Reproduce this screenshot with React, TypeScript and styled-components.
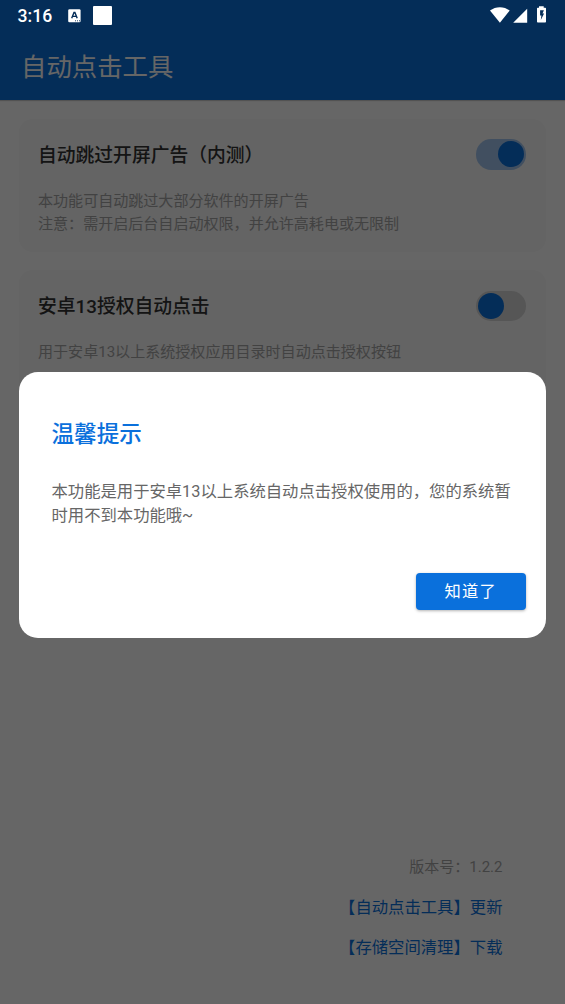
import React from "react";
import styled, { createGlobalStyle } from "styled-components";

const PRIMARY = "#0a70dc";

const GlobalStyle = createGlobalStyle`
  * { box-sizing: border-box; }
  body {
    margin: 0;
    background: #fff;
    font-family: Roboto, "Noto Sans CJK SC", sans-serif;
  }
`;

const Screen = styled.div`
  position: relative;
  display: flex;
  flex-direction: column;
  height: 1004px;
  overflow: hidden;
  background: #fff;
`;

const AppBar = styled.header`
  height: 100px;
  padding: 34px 21px 0;
  display: flex;
  align-items: center;
  background: ${PRIMARY};
  box-shadow: 0 1px 1px rgba(0, 0, 0, 0.2);
`;

const AppTitle = styled.h1`
  margin: 0;
  font-size: 25.4px;
  line-height: 36px;
  font-weight: 400;
  color: #fff;
`;

const CardList = styled.main`
  display: flex;
  flex-direction: column;
  gap: 18px;
  padding: 19px 19px 0;
`;

const Card = styled.section`
  height: 133px;
  padding: 20px 20px 0 19px;
  border-radius: 14px;
  background: #f9f9f9;
`;

const CardHead = styled.div`
  display: flex;
  align-items: flex-start;
  justify-content: space-between;
  height: 31px;
`;

const CardTitle = styled.h2`
  margin: 3px 0 0;
  font-size: 18.8px;
  line-height: 29px;
  font-weight: 500;
  color: #333;
`;

const Switch = styled.div<{ $on?: boolean }>`
  display: flex;
  align-items: center;
  justify-content: ${(p) => (p.$on ? "flex-end" : "flex-start")};
  width: 50px;
  height: 30.5px;
  margin-top: ${(p) => (p.$on ? "0" : "0.5px")};
  padding: 0 2px;
  border-radius: 15.25px;
  background: ${(p) => (p.$on ? "#a3c6ef" : "#d6d6d6")};
`;

const Thumb = styled.span`
  width: 26px;
  height: 26px;
  border-radius: 50%;
  background: ${PRIMARY};
`;

const CardText = styled.p`
  margin: 20px 0 0;
  font-size: 15.05px;
  line-height: 23px;
  color: #a6a6a6;
  white-space: nowrap;
`;

const Footer = styled.footer`
  display: flex;
  flex-direction: column;
  align-items: flex-end;
  margin-top: auto;
  padding: 0 62.5px 37px 0;
`;

const Version = styled.span`
  height: 40px;
  font-size: 15px;
  line-height: 40px;
  color: #a6a6a6;
`;

const FooterLink = styled.a`
  height: 40px;
  font-size: 16.35px;
  line-height: 41px;
  color: ${PRIMARY};
`;

const Scrim = styled.div`
  position: absolute;
  inset: 0;
  display: flex;
  flex-direction: column;
  padding: 372px 19px 0;
  background: rgba(0, 0, 0, 0.6);
`;

const Dialog = styled.div`
  display: flex;
  flex-direction: column;
  height: 265.5px;
  padding: 45px 20px 28px 32.5px;
  border-radius: 19px;
  background: #fff;
`;

const DialogTitle = styled.h2`
  margin: 0;
  font-size: 22.6px;
  line-height: 35px;
  font-weight: 500;
  color: ${PRIMARY};
`;

const DialogText = styled.p`
  margin: 28px 0 0;
  font-size: 16.33px;
  line-height: 24px;
  color: #666;
  white-space: nowrap;
`;

const ConfirmButton = styled.button`
  align-self: flex-end;
  width: 110.5px;
  height: 36.5px;
  margin-top: auto;
  padding: 2px 0 0;
  border: 0;
  border-radius: 4px;
  background: ${PRIMARY};
  color: #fff;
  font-family: inherit;
  font-size: 16.3px;
  line-height: 34.5px;
  letter-spacing: 1.2px;
  box-shadow: 0 1px 3px rgba(0, 0, 0, 0.3);
`;

const StatusBar = styled.div`
  position: absolute;
  top: 0;
  left: 0;
  right: 0;
  height: 32px;
  display: flex;
  align-items: center;
  padding: 0 18px 0 17.5px;
  color: #fff;
`;

const Clock = styled.span`
  width: 50.5px;
  font-size: 17.6px;
  line-height: 32px;
  font-weight: 500;
`;

const Notice = styled.span`
  width: 19px;
  height: 19px;
  margin: -2px 0 0 12px;
  border-radius: 1px;
  background: #fff;
`;

const SystemIcons = styled.div`
  display: flex;
  margin: -2px 0 0 auto;
`;

const KeyboardIcon = () => (
  <svg width="13" height="14" viewBox="0 0 13 14" style={{ marginTop: -1 }}>
    <rect x="0.2" y="0.3" width="12.4" height="13" rx="1.3" fill="#fff" />
    <path d="M3.7 9.3 6 3.5h.9l2.3 5.8M4.7 7.4h3.6" fill="none" stroke="#042d58" strokeWidth="1.4" />
    <path d="M7 11.8h1M9 11.8h1M11 11.8h1" stroke="#042d58" strokeWidth="0.9" />
  </svg>
);

const SignalIcons = () => (
  <svg width="57" height="18" viewBox="0 0 57 18">
    <path d="M0 4.6C5.7.1 14 .1 19.7 4.6L9.9 16.8Z" fill="#fff" />
    <path d="M23.2 16.7 37.2 2.8V16.7Z" fill="#fff" />
    <path d="M49 .2h4.7v1.6h1.6q.7 0 .7.7v13.3q0 .8-.8.8h-7.4q-.8 0-.8-.8V2.5q0-.7.7-.7H49Z" fill="#fff" />
    <path d="M50.1 4.2h3.8l-1.4 3.3h1.6L50.8 14l.6-4.4h-1.3Z" fill="#042d58" />
  </svg>
);

export default function App() {
  return (
    <Screen>
      <GlobalStyle />
      <AppBar>
        <AppTitle>自动点击工具</AppTitle>
      </AppBar>
      <CardList>
        <Card>
          <CardHead>
            <CardTitle>自动跳过开屏广告（内测）</CardTitle>
            <Switch $on>
              <Thumb />
            </Switch>
          </CardHead>
          <CardText>
            本功能可自动跳过大部分软件的开屏广告
            <br />
            注意：需开启后台自启动权限，并允许高耗电或无限制
          </CardText>
        </Card>
        <Card>
          <CardHead>
            <CardTitle>安卓13授权自动点击</CardTitle>
            <Switch>
              <Thumb />
            </Switch>
          </CardHead>
          <CardText>用于安卓13以上系统授权应用目录时自动点击授权按钮</CardText>
        </Card>
      </CardList>
      <Footer>
        <Version>版本号：1.2.2</Version>
        <FooterLink>【自动点击工具】更新</FooterLink>
        <FooterLink>【存储空间清理】下载</FooterLink>
      </Footer>
      <Scrim>
        <Dialog>
          <DialogTitle>温馨提示</DialogTitle>
          <DialogText>
            本功能是用于安卓13以上系统自动点击授权使用的，您的系统暂
            <br />
            时用不到本功能哦~
          </DialogText>
          <ConfirmButton>知道了</ConfirmButton>
        </Dialog>
      </Scrim>
      <StatusBar>
        <Clock>3:16</Clock>
        <KeyboardIcon />
        <Notice />
        <SystemIcons>
          <SignalIcons />
        </SystemIcons>
      </StatusBar>
    </Screen>
  );
}
